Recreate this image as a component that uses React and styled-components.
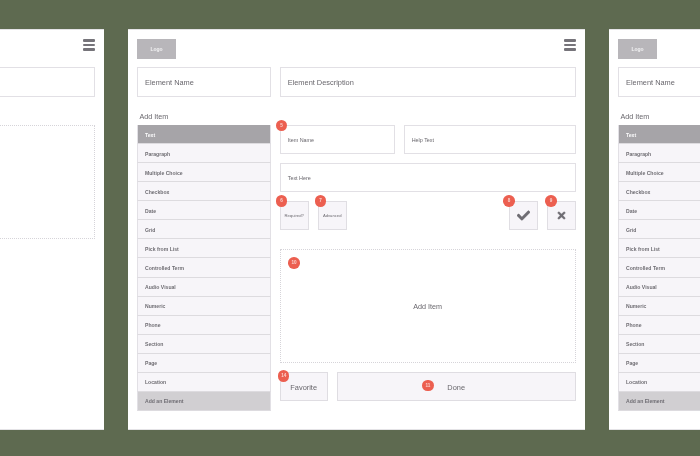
import React from "react";
import styled, { createGlobalStyle } from "styled-components";
import { FaCheck, FaTimes } from "react-icons/fa";

const Global = createGlobalStyle`
  html, body { margin: 0; padding: 0; background: #5e6a50; }
  * { box-sizing: border-box; }
`;
const Stage = styled.div`
  width: 700px; height: 456px; overflow: hidden; background: #5e6a50;
  display: flex; padding: 29px 0 0 0;
  font-family: "Liberation Sans", Arial, sans-serif;
  filter: blur(0.35px);
`;
const Track = styled.div`
  display: flex; gap: 24px; margin-left: -353px; flex: none;
`;
const Screen = styled.section`
  flex: none; width: 457px; height: 400.5px; background: #fff;
  border-top: 1px solid #e4e3e6; border-bottom: 1px solid #e4e3e6;
  padding: 9px 9.3px 0 9px;
  display: flex; flex-direction: column;
`;
const Header = styled.header`
  display: flex; justify-content: space-between; align-items: flex-start; height: 28px;
`;
const Logo = styled.div`
  width: 39px; height: 19.5px; padding-top: 1px; background: #b8b6ba; color: #f2f2f3;
  font-size: 5px; font-weight: 700; display: flex; align-items: center; justify-content: center;
`;
const Burger = styled.div`
  width: 11.5px; height: 12px; display: flex; flex-direction: column; justify-content: space-between;
  i { display: block; height: 2.6px; border-radius: 1px; background: #76747a; }
`;
const Fields = styled.div`
  display: grid; grid-template-columns: 134px 296px; gap: 8.7px; height: 29.5px;
`;
const Field = styled.div`
  border: 1px solid #e2e0e5; background: #fff; color: #68666c;
  font-size: ${p => p.$fs || 7.4}px; display: flex; align-items: center; padding: 1px 0 0 7px;
  position: relative; min-width: 0; width: ${p => (p.$w ? p.$w + "px" : "auto")};
`;
const Body = styled.div`
  display: grid; grid-template-columns: 134px 296px; gap: 8.7px; margin-top: 14px;
`;
const Side = styled.aside`display: flex; flex-direction: column;`;
const SideTitle = styled.div`
  height: 14.5px; padding: 0 0 2.5px 2.5px; font-size: 7.2px; color: #68666c; display: flex; align-items: center;
`;
const List = styled.ul`
  margin: 0; padding: 0; list-style: none; display: flex; flex-direction: column;
`;
const Row = styled.li`
  height: 19.07px; padding: 1px 0 0 7px; display: flex; align-items: center;
  font-size: 5.1px; font-weight: 700;
  border-bottom: 1px solid #dddbdf;
  border-left: 1px solid #e2e0e5; border-right: 1px solid #e2e0e5;
  background: ${p => (p.$k === "on" ? "#a6a4a8" : p.$k === "add" ? "#d1cfd2" : "#f7f5f9")};
  color: ${p => (p.$k === "on" ? "#fbfbfc" : "#6f6d73")};
`;
const Main = styled.div`
  display: flex; flex-direction: column; padding-top: 14px;
`;
const Line = styled.div`
  display: flex; gap: 9px; height: 29px; flex: none; margin-bottom: ${p => p.$mb ?? 9}px;
`;
const Spacer = styled.div`flex: 1 1 auto;`;
const Tile = styled.div`
  position: relative; flex: none; width: 29px; height: 29px; padding-top: 1px; background: #f7f5f9; border: 1px solid #e0dee3;
  display: flex; align-items: center; justify-content: center; color: #6f6d73; font-size: 4.2px;
  svg { stroke: #68666b; stroke-width: ${p => p.$sw || 0}; }
`;
const Drop = styled.div`
  position: relative; height: ${p => p.$h}px; padding-top: 2px; border: 1px dotted #d6d4d9; background: #fff;
  display: flex; align-items: center; justify-content: center; color: #68666c; font-size: 7.2px;
  margin-bottom: ${p => p.$mb || 0}px;
`;
const Action = styled.div`
  position: relative; height: 29px; padding-top: 1px; flex: ${p => (p.$w ? `0 0 ${p.$w}px` : "1 1 auto")};
  background: #f7f5f9; border: 1px solid #dfdde2; color: #68666c; font-size: 7.4px;
  display: flex; align-items: center; justify-content: center;
`;
const Badge = styled.span`
  position: absolute; left: ${p => p.$x}px; top: ${p => p.$y}px; width: 11.5px; height: 11.5px; border-radius: 50%;
  background: #ec5f50; color: #f9d3ce; font-size: 4.6px; font-weight: 700;
  display: flex; align-items: center; justify-content: center; z-index: 2;
`;
const items = ["Text","Paragraph","Multiple Choice","Checkbox","Date","Grid","Pick from List","Controlled Term","Audio Visual","Numeric","Phone","Section","Page","Location","Add an Element"];

const Top = () => (
  <>
    <Header>
      <Logo>Logo</Logo>
      <Burger><i /><i /><i /></Burger>
    </Header>
    <Fields>
      <Field>Element Name</Field>
      <Field>Element Description</Field>
    </Fields>
  </>
);

const Sidebar = () => (
  <Side>
    <SideTitle>Add Item</SideTitle>
    <List>
      {items.map((t, i) => (
        <Row key={t} $k={i === 0 ? "on" : i === items.length - 1 ? "add" : undefined}>{t}</Row>
      ))}
    </List>
  </Side>
);

const Full = () => (
  <Screen>
    <Top />
    <Body>
      <Sidebar />
      <Main>
        <Line>
          <Field $fs={5.4} $w={115}>
            Item Name<Badge $x={-5} $y={-6}>5</Badge>
          </Field>
          <Field $fs={5.4} $w={172}>Help Text</Field>
        </Line>
        <Line>
          <Field $fs={5.4} $w={296}>Text Here</Field>
        </Line>
        <Line $mb={19}>
          <Tile>Required?<Badge $x={-5} $y={-6.5}>6</Badge></Tile>
          <Tile>Advanced<Badge $x={-4} $y={-6.5}>7</Badge></Tile>
          <Spacer />
          <Tile $sw={14}>
            <FaCheck size={13} /><Badge $x={-6.5} $y={-6.5}>8</Badge>
          </Tile>
          <Tile $sw={14}>
            <FaTimes size={11} /><Badge $x={-2.5} $y={-6.5}>9</Badge>
          </Tile>
        </Line>
        <Drop $h={114.5} $mb={9}>
          Add Item<Badge $x={7.5} $y={7.5}>10</Badge>
        </Drop>
        <Line>
          <Action $w={48}>Favorite<Badge $x={-2.75} $y={-3}>14</Badge></Action>
          <Action>Done<Badge $x={84.5} $y={6.7}>11</Badge></Action>
        </Line>
      </Main>
    </Body>
  </Screen>
);

const Overview = () => (
  <Screen>
    <Top />
    <Body>
      <div />
      <Main>
        <Drop $h={114.5} />
      </Main>
    </Body>
  </Screen>
);

export default function App() {
  return (
    <>
      <Global />
      <Stage>
        <Track>
          <Overview />
          <Full />
          <Full />
        </Track>
      </Stage>
    </>
  );
}
